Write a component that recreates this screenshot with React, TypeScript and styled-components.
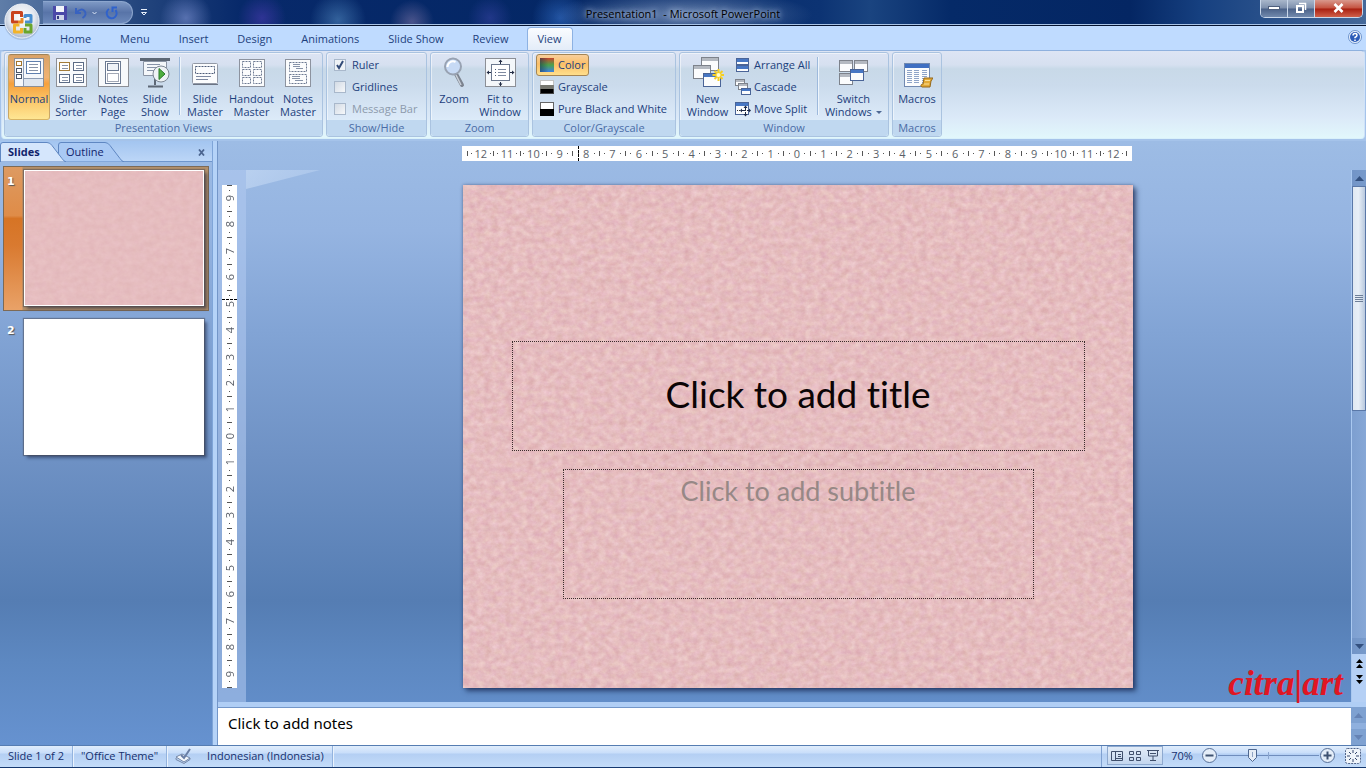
import React from 'react';
import styled, { createGlobalStyle, css } from 'styled-components';

const Global = createGlobalStyle`
  * { box-sizing: border-box; }
  body { margin: 0; background: #5d87c0; }
  button, input { font: inherit; color: inherit; margin: 0; }
`;

const Shell = styled.div`
  min-height: 100vh;
  display: flex;
  flex-direction: column;
  font-family: 'Open Sans', 'Noto Sans', sans-serif;
  font-size: 11px;
  line-height: 13px;
  color: #1d3f7c;
`;

const plainButton = css`
  border: 0;
  padding: 0;
  background: none;
`;

/* ---------- title bar ---------- */

const TitleBar = styled.header`
  position: relative;
  display: grid;
  grid-template-columns: 1fr auto 1fr;
  height: 26px;
  border-bottom: 1px solid #04122f;
  box-shadow: inset 0 -1px 0 #a9c4e6;
  background:
    radial-gradient(ellipse 130px 26px at 50% 60%, rgba(150, 172, 208, 0.65), transparent),
    radial-gradient(circle 26px at 186px 18px, rgba(130, 150, 215, 0.6), transparent),
    radial-gradient(circle 24px at 262px 18px, rgba(86, 62, 190, 0.5), transparent),
    radial-gradient(circle 28px at 338px 20px, rgba(80, 135, 190, 0.6), transparent),
    radial-gradient(circle 22px at 412px 22px, rgba(130, 120, 170, 0.55), transparent),
    radial-gradient(circle 22px at 490px 18px, rgba(60, 70, 170, 0.5), transparent),
    radial-gradient(circle 28px at 560px 18px, rgba(50, 110, 200, 0.6), transparent),
    linear-gradient(90deg, #5f7da8 0, #23457d 140px, #07296a 240px, #042765 600px, #0c3373 820px, #1a4480 870px, #052a68 950px, #042663 1130px, #164080 1200px, #45699a 100%);
`;

const QuickAccess = styled.div`
  display: flex;
  align-items: center;
  gap: 8px;
  margin-left: 43px;
`;

const QuickPill = styled.div`
  display: flex;
  align-items: center;
  gap: 7px;
  width: 90px;
  height: 23px;
  padding: 0 12px 0 10px;
  border: 1px solid #8ca6ce;
  border-left: 0;
  border-radius: 0 12px 12px 0;
  background: linear-gradient(#7d98c4, #5874a8 50%, #6b88ba);
`;

const IconButton = styled.button`
  ${plainButton}
  display: flex;
`;

const AppTitle = styled.h1`
  margin: 0;
  padding-top: 7px;
  font-size: 11px;
  line-height: 14px;
  font-weight: 400;
  color: #000;
  text-shadow: 0 0 5px #b9cbe6, 0 0 8px #b9cbe6;
`;

const WindowButtons = styled.div`
  justify-self: end;
  display: flex;
  height: 18px;
  margin-right: 3px;
  border: 1px solid #c9d7ea;
  border-top: 0;
  border-radius: 0 0 5px 5px;
  overflow: hidden;
`;

const WindowButton = styled.button<{ $close?: boolean }>`
  ${plainButton}
  display: flex;
  align-items: center;
  justify-content: center;
  width: ${p => (p.$close ? 47 : 27)}px;
  padding-bottom: 2px;
  border-right: ${p => (p.$close ? 0 : '1px solid #c9d7ea')};
  background: ${p => p.$close
    ? 'linear-gradient(#d9988c, #c4513f 48%, #a81f10 52%, #d0604a)'
    : 'linear-gradient(#a9b7cb, #7d8fac 48%, #4a6188 52%, #7189ad)'};
`;

const Orb = styled.button`
  ${plainButton}
  position: absolute;
  z-index: 2;
  left: 3px;
  top: 2px;
  width: 38px;
  height: 38px;
`;

/* ---------- ribbon ---------- */

const RibbonTabs = styled.nav`
  display: flex;
  align-items: flex-end;
  height: 24px;
  padding-left: 46px;
  background: #bfdbff;
`;

const RibbonTab = styled.button<{ $active?: boolean }>`
  ${plainButton}
  height: 23px;
  margin: 0 4px 0 3px;
  padding: 0 10px 2px;
  border: 1px solid ${p => (p.$active ? '#8db2e3' : 'transparent')};
  border-bottom: 0;
  border-radius: 4px 4px 0 0;
  background: ${p => (p.$active ? 'linear-gradient(#fafcff, #e3ecf8)' : 'none')};
`;

const HelpSlot = styled.div`
  margin: 0 4px 6px auto;
`;

const RibbonFrame = styled.div`
  padding: 0 1px 2px;
  background: #a5c3ea;
`;

const Ribbon = styled.section`
  display: flex;
  gap: 3px;
  height: 89px;
  padding: 1px 2px;
  border: 1px solid #8fb1de;
  border-color: #8fb1de #cfe2f8 #d9f1fb;
  border-radius: 4px;
  background: linear-gradient(#dde5f4 0, #d6e0f0 14px, #c8d9e8 18px, #cbdbec 34px, #dbe9f8 66px, #e2f8fc 88px);
`;

const GroupBox = styled.fieldset<{ $width: number }>`
  flex: 0 0 ${p => p.$width}px;
  display: flex;
  flex-direction: column;
  min-width: 0;
  margin: 0;
  padding: 0;
  border: 1px solid #aac3e0;
  border-radius: 3px;
  box-shadow: inset 1px 1px 0 rgba(255, 255, 255, 0.5);
  overflow: hidden;
`;

const GroupBody = styled.div`
  display: flex;
  flex: 1;
  padding: 1px 3px 0;
`;

const GroupLabel = styled.div`
  height: 16px;
  line-height: 16px;
  text-align: center;
  color: #4a6ca6;
  background: #c0d8f0;
`;

const BigButton = styled.button<{ $width: number; $active?: boolean }>`
  ${plainButton}
  flex: 0 0 ${p => p.$width}px;
  display: flex;
  flex-direction: column;
  align-items: center;
  gap: 3px;
  height: 66px;
  padding-top: 2px;
  border: 1px solid transparent;
  border-radius: 3px;
  white-space: pre;
  ${p => p.$active && css`
    border-color: #a08358 #c9a666 #d8b464;
    background: linear-gradient(#d9a268, #f0b272 35%, #f6a03c 45%, #fbc567 70%, #fee693);
  `}
`;

const Divider = styled.div`
  flex: 0 0 1px;
  height: 58px;
  margin: 3px 3px;
  background: #9db9dc;
  box-shadow: 1px 0 0 #eef5fc;
`;

const Stack = styled.div`
  display: flex;
  flex-direction: column;
  align-items: flex-start;
`;

const SmallButton = styled.button<{ $active?: boolean }>`
  ${plainButton}
  display: flex;
  align-items: center;
  gap: 3px;
  height: 22px;
  padding: 0 3px 1px 2px;
  border: 1px solid ${p => (p.$active ? '#a58554' : 'transparent')};
  border-radius: 3px;
  white-space: nowrap;
  background: ${p => (p.$active ? 'linear-gradient(#f8cf9c, #fbbf68 45%, #ffdf8c)' : 'none')};
`;

const CheckRow = styled.label<{ $off?: boolean }>`
  display: flex;
  align-items: center;
  gap: 6px;
  height: 22px;
  padding: 0 0 1px 4px;
  white-space: nowrap;
  color: ${p => (p.$off ? '#8d9aac' : 'inherit')};
`;

const Check = styled.input`
  appearance: none;
  width: 12px;
  height: 12px;
  border: 1px solid #a9b8cb;
  background: linear-gradient(135deg, #d3dbe5, #f6f8fa);
  &:checked {
    background: no-repeat center / 10px 10px
      url("data:image/svg+xml,%3Csvg xmlns='http://www.w3.org/2000/svg' viewBox='0 0 10 10'%3E%3Cpath d='M2 5l2 3 4-7' fill='none' stroke='%23334b78' stroke-width='2'/%3E%3C/svg%3E"), #eef2f6;
  }
`;

/* ---------- work area ---------- */

const backdrop = 'linear-gradient(#9dbce5 0, #95b4e1 90px, #82a4d5 190px, #6e91c4 320px, #557db3 460px, #5d88c1 520px, #6692d0 604px)';

const Work = styled.main`
  flex: 1;
  display: flex;
  min-height: 0;
`;

const SidePane = styled.aside`
  flex: 0 0 212px;
  background: ${backdrop};
`;

const PaneTabs = styled.div`
  display: flex;
  height: 21px;
  padding-top: 1px;
  border-bottom: 1px solid #6f96cc;
  background: linear-gradient(#a3c5f0, #bcd6f7);
`;

const PaneTab = styled.button<{ $active?: boolean }>`
  ${plainButton}
  position: relative;
  z-index: ${p => (p.$active ? 1 : 0)};
  width: 66px;
  margin-right: -8px;
  padding: 0 18px 0 8px;
  text-align: left;
  font-weight: ${p => (p.$active ? 700 : 400)};
  color: #10246c;
  svg { position: absolute; z-index: -1; inset: 0; }
`;

const PaneClose = styled.button`
  ${plainButton}
  margin-left: auto;
  padding-right: 7px;
`;

const ThumbList = styled.ol`
  list-style: none;
  margin: 0;
  padding: 4px 3px;
`;

const ThumbItem = styled.li<{ $active?: boolean }>`
  display: flex;
  height: 145px;
  margin-bottom: 4px;
  padding: 3px 4px 4px 3px;
  border: 1px solid ${p => (p.$active ? '#7d6a55' : 'transparent')};
  background: ${p => (p.$active
    ? 'linear-gradient(90deg, transparent 18px, #b28f6a 19px), linear-gradient(#dd9a61, #df8c48 34%, #d67425 36%, #d97a30 55%, #e9a268)'
    : 'none')};
`;

const ThumbNumber = styled.span`
  width: 17px;
  padding-top: 5px;
  font: bold 11px/13px 'DejaVu Sans', sans-serif;
  color: #fff;
  text-shadow: 1px 1px 1px #555;
`;

const Thumb = styled.button<{ $pink?: boolean }>`
  ${plainButton}
  position: relative;
  flex: 1;
  height: 136px;
  border: 1px solid #fff;
  background: ${p => (p.$pink ? '#e6bcbe' : '#fff')};
  box-shadow: 0 0 1px 1px rgba(70, 70, 80, 0.5), 3px 3px 3px rgba(20, 30, 60, 0.5);
  overflow: hidden;
`;

const PaneSplitter = styled.div`
  flex: 0 0 6px;
  border-left: 1px solid #7fa5d8;
  border-right: 1px solid #7396c8;
  background: #b5d3f8;
`;

const EditColumn = styled.div`
  flex: 1;
  min-width: 0;
  display: flex;
  flex-direction: column;
`;

const Editor = styled.section`
  position: relative;
  flex: 1;
  display: grid;
  grid-template-columns: 28px minmax(0, 1fr) 15px;
  grid-template-rows: 29px minmax(0, 1fr);
  background: ${backdrop};
`;

const TopGutter = styled.div`
  grid-column: 2;
  display: flex;
  align-items: flex-start;
  justify-content: center;
  padding: 5px 3px 0 0;
`;

const SideGutter = styled.div`
  grid-column: 1;
  grid-row: 2;
  display: flex;
  align-items: center;
  padding: 0 0 0 4px;
  background: rgba(178, 203, 240, 0.55);
`;

const RulerBar = styled.div<{ $vertical?: boolean }>`
  display: flex;
  flex-direction: ${p => (p.$vertical ? 'column' : 'row')};
  align-items: center;
  width: ${p => (p.$vertical ? '15px' : '670px')};
  height: ${p => (p.$vertical ? '503px' : '15px')};
  padding: ${p => (p.$vertical ? '0' : '0 5px')};
  background: #fff;
  font: 11px/13px 'Open Sans', sans-serif;
  color: #5a5f68;
`;

const RulerUnit = styled.div<{ $vertical?: boolean }>`
  flex: 1;
  display: flex;
  flex-direction: ${p => (p.$vertical ? 'column' : 'row')};
  align-items: center;
  justify-content: space-between;
  min-width: 0;
  min-height: 0;
`;

const Tick = styled.i<{ $vertical?: boolean; $dot?: boolean }>`
  width: ${p => (p.$vertical && !p.$dot ? 5 : 1)}px;
  height: ${p => (p.$vertical || p.$dot ? 1 : 5)}px;
  background: #555;
`;

const RulerNumber = styled.span<{ $vertical?: boolean }>`
  ${p => p.$vertical && css`
    writing-mode: vertical-rl;
    transform: rotate(180deg);
  `}
`;

const PointerMark = styled.i<{ $vertical?: boolean }>`
  position: absolute;
  ${p => p.$vertical
    ? 'left: 4px; top: 158px; width: 15px; border-top: 1px dashed #000;'
    : 'left: 360px; top: 5px; height: 15px; border-left: 1px dashed #000;'}
`;

const Canvas = styled.div`
  grid-column: 2;
  grid-row: 2;
  position: relative;
  display: flex;
  align-items: center;
  justify-content: center;
  padding-right: 2px;
`;

const Glint = styled.div`
  position: absolute;
  left: 0;
  top: 0;
  width: 74px;
  height: 19px;
  clip-path: polygon(0 0, 100% 0, 0 100%);
  background: linear-gradient(135deg, rgba(205, 223, 247, 0.6), rgba(190, 212, 242, 0.4));
`;

const Slide = styled.article`
  position: relative;
  display: flex;
  flex-direction: column;
  align-items: center;
  gap: 18px;
  width: 670px;
  height: 503px;
  padding: 156px 0 0 1px;
  background: #e6bcbe;
  box-shadow: 3px 3px 5px rgba(20, 35, 75, 0.7), 0 0 3px rgba(20, 35, 75, 0.4);
  font-family: Lato, 'Open Sans', sans-serif;
  font-variant-ligatures: none;
`;

const Placeholder = styled.div<{ $title?: boolean }>`
  position: relative;
  display: flex;
  justify-content: center;
  align-items: ${p => (p.$title ? 'center' : 'flex-start')};
  width: ${p => (p.$title ? 573 : 471)}px;
  height: ${p => (p.$title ? 110 : 130)}px;
  padding: ${p => (p.$title ? '0 0 4px' : '3px 0 0')};
  border: 1px dotted #3b2c2c;
  font-size: ${p => (p.$title ? 37 : 27)}px;
  line-height: 36px;
  color: ${p => (p.$title ? '#0b0405' : '#978886')};
`;

const TextureSvg = styled.svg`
  position: absolute;
  inset: 0;
  width: 100%;
  height: 100%;
`;

const Scroll = styled.div`
  grid-column: 3;
  grid-row: 2;
  display: flex;
  flex-direction: column;
  border-left: 1px solid #a9c8f0;
  background: linear-gradient(90deg, #7d9fd0, #86a7d6);
`;

const ScrollStep = styled.button`
  ${plainButton}
  display: flex;
  align-items: center;
  justify-content: center;
  height: 16px;
  background: rgba(90, 125, 180, 0.3);
`;

const ScrollThumb = styled.div`
  flex: 0 0 225px;
  display: flex;
  align-items: center;
  justify-content: center;
  border: 1px solid #5a78a8;
  background: linear-gradient(90deg, #dfe8f2, #e8eff7 45%, #b9c9de);
`;

const SlideSteps = styled.div`
  display: flex;
  flex-direction: column;
  height: 48px;
  padding-top: 1px;
  background: #b5d0f5;
`;

const SlideStep = styled.button`
  ${plainButton}
  display: flex;
  justify-content: center;
  height: 16px;
  padding-top: 4px;
`;

const Spacer = styled.div`
  flex: 1;
`;

const Watermark = styled.div`
  position: absolute;
  right: 23px;
  bottom: 0;
  font: italic bold 35px/36px 'Liberation Serif', serif;
  color: #e01623;
`;

const Notes = styled.section`
  display: grid;
  grid-template-columns: 1fr 15px;
  height: 43px;
  padding-top: 5px;
  background: #b0cef5;
`;

const NotesInput = styled.textarea`
  display: block;
  width: 100%;
  height: 38px;
  padding: 5px 10px;
  border: 0;
  border-top: 1px solid #7396c8;
  resize: none;
  outline: 0;
  font: 15px/20px 'Noto Sans', sans-serif;
  color: #000;
  overflow: hidden;
  &::placeholder { color: #000; opacity: 1; }
`;

const NotesScroll = styled.div`
  display: flex;
  flex-direction: column;
  justify-content: space-between;
  background: #8fb0de;
`;

/* ---------- status bar ---------- */

const StatusBar = styled.footer`
  display: flex;
  align-items: stretch;
  height: 23px;
  border-top: 1px solid #567db2;
  border-bottom: 1px solid #15386f;
  background: linear-gradient(#e0edfc 0, #c9defa 7px, #b4cff3 8px, #c4dcf9 100%);
  color: #15306e;
`;

const StatusCell = styled.div`
  display: flex;
  align-items: center;
  gap: 15px;
  padding: 0 8px 2px;
  border-right: 1px solid #93b3de;
  box-shadow: 1px 0 0 #e9f2fd;
`;

const StatusTools = styled.div`
  display: flex;
  align-items: center;
  margin-left: auto;
  padding: 0 5px 2px;
  border-left: 1px solid #7fa0d0;
`;

const ViewButtons = styled.div`
  display: flex;
  width: 56px;
  height: 19px;
  border: 1px solid #8ea9cf;
  background: linear-gradient(#e2ecf8, #c3d6ef);
`;

const ViewButton = styled.button`
  ${plainButton}
  flex: 1;
  display: flex;
  align-items: center;
  justify-content: center;
`;

const ZoomValue = styled.button`
  ${plainButton}
  width: 22px;
  margin: 0 8px;
`;

const ZoomRange = styled.input`
  appearance: none;
  width: 101px;
  height: 16px;
  background:
    linear-gradient(#8aa5cf, #8aa5cf) 50% 50% / 1px 7px no-repeat,
    linear-gradient(#6f8dbd, #6f8dbd) 0 50% / 100% 1px no-repeat;
  &::-webkit-slider-thumb {
    appearance: none;
    width: 9px;
    height: 13px;
    background: no-repeat center / 9px 13px
      url("data:image/svg+xml,%3Csvg xmlns='http://www.w3.org/2000/svg' viewBox='0 0 9 13'%3E%3Cpath d='M.5.5h8v8l-4 4-4-4z' fill='%23e6edf6' stroke='%234f6890'/%3E%3Cpath d='M4.500 3v5' stroke='%2390a4c4'/%3E%3C/svg%3E");
  }
`;

/* ---------- drawings ---------- */

/* Paper grain; soft halves the contrast for the thumbnail. */
const Texture = ({ id, soft }: { id: string; soft?: boolean }) => (
  <TextureSvg aria-hidden="true">
    <filter id={id} x="0" y="0" width="100%" height="100%" colorInterpolationFilters="sRGB">
      <feTurbulence type="fractalNoise" baseFrequency="0.14 0.17" numOctaves="5" seed="8" />
      <feColorMatrix
        values={soft
          ? '0.04 0 0 0 0.88  0.06 0.02 0 0 0.70  0.06 0 0.02 0 0.71  0 0 0 0 1'
          : '0.10 0 0 0 0.85  0.16 0.06 0 0 0.63  0.14 0 0.06 0 0.65  0 0 0 0 1'}
      />
    </filter>
    <rect width="100%" height="100%" filter={`url(#${id})`} />
  </TextureSvg>
);

const Svg32 = ({ children }: { children: React.ReactNode }) => (
  <svg width="32" height="32" viewBox="0 0 32 32" fill="none" aria-hidden="true">{children}</svg>
);
const Svg16 = ({ children }: { children: React.ReactNode }) => (
  <svg width="16" height="16" viewBox="0 0 16 16" fill="none" aria-hidden="true">{children}</svg>
);

const lines = (x: number, y: number, w: number, n: number, step = 2, c = '#8793a8') =>
  Array.from({ length: n }, (_, i) => <path key={`${x}-${y}-${i}`} d={`M${x} ${y + i * step + 0.5}h${w}`} stroke={c} />);

const NormalIcon = () => (
  <Svg32>
    <rect x="1.500" y="1.500" width="29" height="28" fill="#f5f7fa" stroke="#8c8f96" />
    <path d="M10.500 2v27M11 21.500h19" stroke="#8d9cb4" />
    <path d="M11 22h19v7H11z" fill="#dfe6ef" />
    {[4, 11, 17].map(y => <rect key={y} x="3.500" y={y + 0.5} width="5" height="4" fill="#fff" stroke={y === 4 ? '#a5762c' : '#4a5568'} />)}
    <rect x="13.500" y="4.500" width="14" height="12" fill="#fff" stroke="#5f7fae" />
    {lines(16, 7, 9, 3, 3)}
  </Svg32>
);
const SorterIcon = () => (
  <Svg32>
    <rect x="1.500" y="1.500" width="30" height="28" fill="#f7f9fb" stroke="#8c8f96" />
    {[[4, 5], [18, 5], [4, 17], [18, 17]].map(([x, y], i) => (
      <g key={i}>
        <rect x={x + 0.5} y={y + 0.5} width="10" height="8" fill="#fff" stroke={i === 0 ? '#a37c3a' : '#5b6b85'} />
        {lines(x + 3, y + 3, 6, 2, 3)}
      </g>
    ))}
  </Svg32>
);
const NotesPageIcon = () => (
  <Svg32>
    <rect x="1.500" y="1.500" width="30" height="28" fill="#f7f9fb" stroke="#8c8f96" />
    <rect x="8.500" y="4.500" width="15" height="22" fill="#fff" stroke="#6b7a92" />
    <rect x="10.500" y="6.500" width="11" height="7" fill="#eef2f7" stroke="#6b7a92" />
    <rect x="10.500" y="16.500" width="11" height="8" stroke="#44506a" strokeDasharray="1 1" />
  </Svg32>
);
const ShowIcon = () => (
  <Svg32>
    <rect x="1" y="1" width="30" height="3" fill="#5d6775" />
    <path d="M4.500 4.500h23v14h-23z" fill="#f4f7fa" stroke="#8a94a4" />
    {lines(8, 7, 13, 3, 3)}
    <path d="M16 20v8M9 29.500h15" stroke="#5d6775" strokeWidth="2" />
    <circle cx="22" cy="17" r="8" fill="#eef2f5" stroke="#7d8794" />
    <path d="M20 11.500v11l6-5.500z" fill="#4fae3e" stroke="#2a7a2a" />
  </Svg32>
);
const SlideMasterIcon = () => (
  <Svg32>
    <rect x="3.500" y="6.500" width="25" height="20" rx="1" fill="#fbfcfd" stroke="#9299a6" />
    <path d="M4 27.500h25" stroke="#6b7484" />
    <rect x="6.500" y="9.500" width="19" height="7" stroke="#4d5c78" strokeDasharray="2 1" />
    <path d="M7 19.500h15M7 22.500h12" stroke="#7d88a0" />
  </Svg32>
);
const HandoutIcon = () => (
  <Svg32>
    <rect x="3.500" y="2.500" width="25" height="27" fill="#fbfcfd" stroke="#8d939f" />
    {[3, 11, 19].map(y => [6, 17].map(x => (
      <rect key={`${x}${y}`} x={x + 0.5} y={y + 1.5} width="8" height="6" stroke="#6d7a92" strokeDasharray="2 1" />
    )))}
  </Svg32>
);
const NotesMasterIcon = () => (
  <Svg32>
    <rect x="3.500" y="2.500" width="25" height="27" fill="#fbfcfd" stroke="#8d939f" />
    <rect x="7.500" y="5.500" width="17" height="9" stroke="#6d7a92" strokeDasharray="2 1" />
    <rect x="7.500" y="17.500" width="17" height="9" stroke="#6d7a92" strokeDasharray="2 1" />
    {lines(11, 7, 7, 2, 2)}{lines(14, 11, 7, 1)}{lines(10, 19, 8, 2, 2)}{lines(13, 23, 8, 1)}
  </Svg32>
);
const ZoomIcon = () => (
  <Svg32>
    <path d="M18 17l6 11" stroke="#7c838f" strokeWidth="4" strokeLinecap="round" />
    <path d="M18 18l5 10" stroke="#c9cfd8" strokeWidth="1.500" />
    <circle cx="15" cy="9.500" r="8" fill="#c7daf5" stroke="#98a2b2" strokeWidth="2" />
    <path d="M9.500 10a5.500 5.500 0 0 1 8-5" stroke="#fff" strokeWidth="2" />
  </Svg32>
);
const FitIcon = () => (
  <Svg32>
    <rect x="1.500" y="1.500" width="30" height="28" fill="#f4f7fa" stroke="#8c8f96" />
    <rect x="7.500" y="7.500" width="18" height="16" fill="#fff" stroke="#6c788e" />
    {lines(14, 12, 8, 3, 3, '#7f8aa0')}
    <path d="M11 12.500h1M11 15.500h1M11 18.500h1" stroke="#4c5a74" />
    <path d="M16.500 3v4M16.500 25v4M3 15.500h4M26 15.500h4" stroke="#222c44" />
    <path d="M14.500 5l2-2.500 2 2.500zM14.500 26.500l2 2.500 2-2.500zM5 13.500l-2.500 2 2.500 2zM28 13.500l2.500 2-2.500 2z" fill="#222c44" />
  </Svg32>
);

const Win = ({ x, y, w, h, blue }: { x: number; y: number; w: number; h: number; blue?: boolean }) => (
  <g>
    <rect x={x + 0.5} y={y + 0.5} width={w} height={h} fill="#fbfcfd" stroke={blue ? '#4a6497' : '#7d828b'} />
    <rect x={x + 1} y={y + 1} width={w - 1} height={w > 10 ? 3 : 2} fill={blue ? '#4777c4' : '#b4b9c1'} />
  </g>
);

const NewWindowIcon = () => (
  <Svg32>
    <Win x={9} y={0} w={17} h={13} />
    <Win x={1} y={8} w={17} h={13} />
    <Win x={11} y={16} w={17} h={13} blue />
    <path d="M26.500 12v12M20.500 18h12M22.500 14l8 8M30.500 14l-8 8" stroke="#f5cf24" strokeWidth="2" />
    <circle cx="26.500" cy="18" r="2" fill="#fffbd0" />
  </Svg32>
);
const SwitchIcon = () => (
  <Svg32>
    <Win x={2} y={3} w={13} h={11} />
    <Win x={17} y={3} w={13} h={11} />
    <Win x={2} y={16} w={13} h={11} />
    <Win x={13} y={12} w={13} h={11} blue />
  </Svg32>
);
const MacrosIcon = () => (
  <Svg32>
    <rect x="3.500" y="6.500" width="25" height="23" fill="#fbfcfd" stroke="#7189b0" />
    <rect x="4" y="7" width="24" height="4" fill="#3f6fc2" />
    {[6, 13, 21].map(x => lines(x, 13, 5, 7, 2, '#8ea4c8'))}
    <path d="M23 21h9l-2 3-1 6h-8c-2-1-1-3 1-3z" fill="#e3aa36" stroke="#94671a" />
    <path d="M24 23.500h5M23 27h5" stroke="#fbe09a" />
  </Svg32>
);
const ArrangeIcon = () => (
  <Svg16><Win x={1} y={1} w={12} h={6} blue /><Win x={1} y={8} w={12} h={6} blue /></Svg16>
);
const CascadeIcon = () => (
  <Svg16><Win x={0} y={0} w={9} h={6} /><Win x={3} y={4} w={9} h={6} /><Win x={6} y={9} w={9} h={6} blue /></Svg16>
);
const SplitIcon = () => (
  <Svg16>
    <Win x={0} y={1} w={13} h={12} blue />
    <path d="M2 9.500h12" stroke="#333" strokeDasharray="1 1" />
    <path d="M10.500 5v10M6 9.500h9" stroke="#1d2a48" strokeDasharray="4 2" />
    <path d="M8.500 7l2-2.500 2 2.500zM8.500 13l2 2.500 2-2.500zM14 7.500l2 2-2 2zM7 7.500l-2 2 2 2z" fill="#1d2a48" />
  </Svg16>
);
const ColorIcon = () => (
  <Svg16>
    <defs>
      <linearGradient id="hueA" x1="0" x2="0" y1="0" y2="1"><stop offset="0" stopColor="#c8452c" /><stop offset=".5" stopColor="#4ba24c" /><stop offset="1" stopColor="#3f7fe0" /></linearGradient>
      <linearGradient id="hueB"><stop offset="0" stopColor="#14324c" stopOpacity=".55" /><stop offset=".6" stopColor="#14324c" stopOpacity="0" /></linearGradient>
    </defs>
    <rect x="1" y="1" width="14" height="14" fill="url(#hueA)" />
    <rect x="1" y="1" width="14" height="14" fill="url(#hueB)" />
  </Svg16>
);
const GrayIcon = () => (
  <Svg16>
    <rect x="1" y="1" width="14" height="14" fill="#fff" />
    <path d="M1 6h14v4H1z" fill="#77776f" /><path d="M1 10h14v5H1z" fill="#000" />
    <rect x="1.500" y="1.500" width="13" height="13" stroke="#888" strokeOpacity=".5" />
  </Svg16>
);
const BwIcon = () => (
  <Svg16>
    <rect x="1.500" y="1.500" width="13" height="13" fill="#fff" stroke="#666" /><path d="M1 8h14v7H1z" fill="#000" />
  </Svg16>
);

const OrbArt = () => (
  <svg width="38" height="38" viewBox="0 0 38 38" fill="none" aria-hidden="true">
    <defs>
      <radialGradient id="orb" cx=".5" cy=".4" r=".62"><stop offset="0" stopColor="#fff" /><stop offset=".6" stopColor="#e4e8ef" /><stop offset="1" stopColor="#a3b1c9" /></radialGradient>
    </defs>
    <circle cx="19" cy="20" r="18" fill="#8fa5c6" opacity=".5" />
    <circle cx="19" cy="19" r="17" fill="url(#orb)" stroke="#eef2f8" />
    <g strokeWidth="3" strokeLinejoin="round">
      <path d="M15 20H9.500V10.500h9V15" stroke="#c9441f" />
      <path d="M15 20h4V16" stroke="#e98a25" />
      <path d="M22 20H28v-6.500h-6v2.500" stroke="#4a8fd0" />
      <path d="M16.500 23h-5v7h7V26" stroke="#f2b32a" />
      <path d="M22 26v4H28v-7h-6" stroke="#6aa62c" />
    </g>
  </svg>
);

const Arrow = ({ up, color = '#33507f' }: { up?: boolean; color?: string }) => (
  <svg width="9" height="5" viewBox="0 0 9 5" aria-hidden="true"><path d={up ? 'M0 5h9L4.500 0z' : 'M0 0h9L4.500 5z'} fill={color} /></svg>
);
const DoubleArrow = ({ up }: { up?: boolean }) => (
  <svg width="7" height="10" viewBox="0 0 7 10" aria-hidden="true">
    <path d={up ? 'M0 4h7L3.500 0zM0 9h7L3.500 5z' : 'M0 0h7L3.500 4zM0 5h7L3.500 9z'} fill="#000" />
  </svg>
);

const ZoomStep = ({ plus }: { plus?: boolean }) => (
  <svg width="17" height="17" viewBox="0 0 17 17" fill="none" aria-hidden="true">
    <circle cx="8.500" cy="8.500" r="7" fill="#e4edf8" stroke="#566f98" />
    <path d={plus ? 'M4.500 8.500h8M8.500 4.500v8' : 'M4.500 8.500h8'} stroke="#3f5271" strokeWidth="2" />
  </svg>
);

const TabShape = ({ active }: { active?: boolean }) => (
  <svg width="66" height="20" viewBox="0 0 66 20" aria-hidden="true">
    <path d="M.5 20V3q0-2.500 2.500-2.500h44q3 0 5 3l10 13q2 3 4 3.500z" fill={active ? '#d5e6fc' : '#a9c9f4'} stroke="#5f87c2" />
  </svg>
);

/* ---------- composed parts ---------- */

const Group = ({ label, width, children }: { label: string; width: number; children: React.ReactNode }) => (
  <GroupBox $width={width} aria-label={label}>
    <GroupBody>{children}</GroupBody>
    <GroupLabel>{label}</GroupLabel>
  </GroupBox>
);

const Ruler = ({ max, vertical }: { max: number; vertical?: boolean }) => (
  <RulerBar $vertical={vertical}>
    {Array.from({ length: max * 2 + 1 }, (_, i) => Math.abs(i - max)).map((n, i) => (
      <RulerUnit key={i} $vertical={vertical}>
        <Tick $vertical={vertical} />
        <Tick $dot />
        <RulerNumber $vertical={vertical}>{n}</RulerNumber>
        <Tick $dot />
        <span />
      </RulerUnit>
    ))}
    <Tick $vertical={vertical} />
  </RulerBar>
);

const MenuCaret = styled.span`
  display: inline-block;
  margin-left: 4px;
  vertical-align: 2px;
  border: 3px solid transparent;
  border-top-color: #4d6894;
  border-bottom: 0;
`;

const tabs = ['Home', 'Menu', 'Insert', 'Design', 'Animations', 'Slide Show', 'Review', 'View'];

export default function App() {
  return (
    <Shell>
      <Global />
      <TitleBar>
        <QuickAccess>
          <QuickPill>
            <IconButton aria-label="Save">
              <svg width="14" height="14" viewBox="0 0 14 14" aria-hidden="true">
                <path d="M0 0h14v14H0z" fill="#4a48a8" /><path d="M3 0h8v6H3z" fill="#f2f4fa" /><path d="M3 9h8v5H3z" fill="#cfd5ea" /><path d="M4 10h2v3H4z" fill="#333b80" />
              </svg>
            </IconButton>
            <IconButton aria-label="Undo">
              <svg width="24" height="14" viewBox="0 0 24 14" fill="none" aria-hidden="true">
                <path d="M2 2v5h5M2.500 6.500q5-5 8-1.500t-2 7" stroke="#3862c0" strokeWidth="2" />
                <path d="M18.500 6l2 2 2-2" stroke="#dbe6f6" />
              </svg>
            </IconButton>
            <IconButton aria-label="Redo">
              <svg width="14" height="14" viewBox="0 0 14 14" fill="none" aria-hidden="true">
                <path d="M4 3a5 5 0 1 0 6.500 1M12 1.500H7.500V6" stroke="#2f62cc" strokeWidth="2" />
              </svg>
            </IconButton>
          </QuickPill>
          <IconButton aria-label="Customize toolbar">
            <svg width="6" height="7" viewBox="0 0 6 7" fill="none" aria-hidden="true"><path d="M0 .5h6M.5 3.500h5L3 6z" stroke="#e6eefa" /></svg>
          </IconButton>
        </QuickAccess>
        <AppTitle>Presentation1&nbsp; - Microsoft PowerPoint</AppTitle>
        <WindowButtons>
          <WindowButton aria-label="Minimize"><svg width="12" height="5" aria-hidden="true"><rect x=".5" y="1.500" width="11" height="3" fill="#fff" stroke="#4f5f7d" /></svg></WindowButton>
          <WindowButton aria-label="Restore">
            <svg width="12" height="12" viewBox="0 0 12 12" fill="none" aria-hidden="true"><path d="M4 1.500h6.500V8" stroke="#fff" strokeWidth="1.500" /><rect x="2" y="4" width="6" height="6" stroke="#fff" strokeWidth="2" /></svg>
          </WindowButton>
          <WindowButton aria-label="Close" $close>
            <svg width="11" height="10" viewBox="0 0 11 10" aria-hidden="true"><path d="M1.500 1l8 8M9.500 1l-8 8" stroke="#fff" strokeWidth="2.600" /></svg>
          </WindowButton>
        </WindowButtons>
        <Orb aria-label="Office"><OrbArt /></Orb>
      </TitleBar>

      <RibbonTabs>
        {tabs.map(t => <RibbonTab key={t} $active={t === 'View'}>{t}</RibbonTab>)}
        <HelpSlot>
          <IconButton aria-label="Help">
            <svg width="14" height="14" viewBox="0 0 14 14" fill="none" aria-hidden="true">
              <circle cx="7" cy="7" r="6.500" fill="#eaf2fc" stroke="#6d93cc" /><circle cx="7" cy="7" r="5" fill="#2c5cb8" />
              <path d="M5 5.500q0-2 2-2t2 1.700q0 1-2 2.300v.8M7 9.500v1.500" stroke="#fff" strokeWidth="1.500" />
            </svg>
          </IconButton>
        </HelpSlot>
      </RibbonTabs>

      <RibbonFrame>
        <Ribbon>
          <Group label="Presentation Views" width={319}>
            <BigButton $width={42} $active><NormalIcon />Normal</BigButton>
            <BigButton $width={42}><SorterIcon />{'Slide\nSorter'}</BigButton>
            <BigButton $width={42}><NotesPageIcon />{'Notes\nPage'}</BigButton>
            <BigButton $width={42}><ShowIcon />{'Slide\nShow'}</BigButton>
            <Divider />
            <BigButton $width={44}><SlideMasterIcon />{'Slide\nMaster'}</BigButton>
            <BigButton $width={49}><HandoutIcon />{'Handout\nMaster'}</BigButton>
            <BigButton $width={44}><NotesMasterIcon />{'Notes\nMaster'}</BigButton>
          </Group>
          <Group label="Show/Hide" width={101}>
            <Stack>
              <CheckRow><Check type="checkbox" defaultChecked />Ruler</CheckRow>
              <CheckRow><Check type="checkbox" />Gridlines</CheckRow>
              <CheckRow $off><Check type="checkbox" disabled />Message Bar</CheckRow>
            </Stack>
          </Group>
          <Group label="Zoom" width={99}>
            <BigButton $width={40}><ZoomIcon />Zoom</BigButton>
            <BigButton $width={52}><FitIcon />{'Fit to\nWindow'}</BigButton>
          </Group>
          <Group label="Color/Grayscale" width={144}>
            <Stack>
              <SmallButton $active><ColorIcon />Color</SmallButton>
              <SmallButton><GrayIcon />Grayscale</SmallButton>
              <SmallButton><BwIcon />Pure Black and White</SmallButton>
            </Stack>
          </Group>
          <Group label="Window" width={210}>
            <BigButton $width={49}><NewWindowIcon />{'New\nWindow'}</BigButton>
            <Stack>
              <SmallButton><ArrangeIcon />Arrange All</SmallButton>
              <SmallButton><CascadeIcon />Cascade</SmallButton>
              <SmallButton><SplitIcon />Move Split</SmallButton>
            </Stack>
            <Divider />
            <BigButton $width={64}><SwitchIcon /><span>{'Switch\nWindows'}<MenuCaret /></span></BigButton>
          </Group>
          <Group label="Macros" width={50}>
            <BigButton $width={42}><MacrosIcon />Macros</BigButton>
          </Group>
        </Ribbon>
      </RibbonFrame>

      <Work>
        <SidePane>
          <PaneTabs>
            <PaneTab $active><TabShape active />Slides</PaneTab>
            <PaneTab><TabShape />Outline</PaneTab>
            <PaneClose aria-label="Close pane">
              <svg width="7" height="7" viewBox="0 0 7 7" aria-hidden="true"><path d="M1 .5l5 6M6 .5l-5 6" stroke="#4c6590" strokeWidth="1.800" /></svg>
            </PaneClose>
          </PaneTabs>
          <ThumbList>
            <ThumbItem $active><ThumbNumber>1</ThumbNumber><Thumb $pink aria-label="Slide 1"><Texture id="grainSmall" soft /></Thumb></ThumbItem>
            <ThumbItem><ThumbNumber>2</ThumbNumber><Thumb aria-label="Slide 2" /></ThumbItem>
          </ThumbList>
        </SidePane>
        <PaneSplitter />
        <EditColumn>
          <Editor>
            <TopGutter><Ruler max={12} /></TopGutter>
            <SideGutter><Ruler max={9} vertical /></SideGutter>
            <Canvas>
              <Glint />
              <Slide>
                <Texture id="grain" />
                <Placeholder $title>Click to add title</Placeholder>
                <Placeholder>Click to add subtitle</Placeholder>
              </Slide>
            </Canvas>
            <Scroll>
              <ScrollStep aria-label="Scroll up"><Arrow up /></ScrollStep>
              <ScrollThumb>
                <svg width="8" height="8" aria-hidden="true"><path d="M0 .5h8M0 2.500h8M0 4.500h8M0 6.500h8" stroke="#6e7f98" /></svg>
              </ScrollThumb>
              <Spacer />
              <ScrollStep aria-label="Scroll down"><Arrow /></ScrollStep>
              <SlideSteps>
                <SlideStep aria-label="Previous slide"><DoubleArrow up /></SlideStep>
                <SlideStep aria-label="Next slide"><DoubleArrow /></SlideStep>
              </SlideSteps>
            </Scroll>
            <PointerMark />
            <PointerMark $vertical />
            <Watermark>citra|art</Watermark>
          </Editor>
          <Notes>
            <NotesInput aria-label="Notes" placeholder="Click to add notes" />
            <NotesScroll>
              <ScrollStep aria-label="Scroll notes up"><Arrow up color="#6583b5" /></ScrollStep>
              <ScrollStep aria-label="Scroll notes down"><Arrow color="#6583b5" /></ScrollStep>
            </NotesScroll>
          </Notes>
        </EditColumn>
      </Work>

      <StatusBar>
        <StatusCell>Slide 1 of 2</StatusCell>
        <StatusCell>"Office Theme"</StatusCell>
        <StatusCell>
          <svg width="17" height="16" viewBox="0 0 17 16" fill="none" aria-hidden="true">
            <path d="M1 9l6-3 8 4-6 4z" fill="#f4f7fb" stroke="#7486a6" /><path d="M1 10v1.500l8 4 6-4V10" stroke="#7486a6" />
            <path d="M6 7l3 3 6-9" stroke="#6a7ea4" strokeWidth="2" />
          </svg>
          Indonesian (Indonesia)
        </StatusCell>
        <StatusTools>
          <ViewButtons>
            <ViewButton aria-label="Normal view"><svg width="12" height="10" fill="none" aria-hidden="true"><path d="M.5.5h11v9H.5zM4.500 0v10M7 3.500h3M7 5.500h3M5 7.500h6" stroke="#3f4f6c" /></svg></ViewButton>
            <ViewButton aria-label="Sorter view"><svg width="12" height="10" fill="none" aria-hidden="true"><path d="M.5.5h4v3h-4zM7.500.5h4v3h-4zM.5 6.500h4v3h-4zM7.500 6.500h4v3h-4z" stroke="#3f4f6c" /></svg></ViewButton>
            <ViewButton aria-label="Slide show view"><svg width="12" height="11" fill="none" aria-hidden="true"><path d="M0 .5h12M1.500 1v5h9V1M3 3.500h6M6 6v4M3 10.500h6" stroke="#3f4f6c" /></svg></ViewButton>
          </ViewButtons>
          <ZoomValue>70%</ZoomValue>
          <IconButton aria-label="Zoom out"><ZoomStep /></IconButton>
          <ZoomRange type="range" aria-label="Zoom level" defaultValue={33} />
          <IconButton aria-label="Zoom in"><ZoomStep plus /></IconButton>
          <IconButton aria-label="Fit slide to window">
            <svg width="25" height="16" viewBox="-9 0 25 16" fill="none" aria-hidden="true">
              <rect x=".5" y=".5" width="15" height="15" rx="2" fill="#eff4fa" stroke="#50648a" strokeDasharray="2 1" />
              <path d="M8 2v3M8 11v3M2 8h3M11 8h3M4 4l2 2M12 4l-2 2M4 12l2-2M12 12l-2-2" stroke="#34466c" />
            </svg>
          </IconButton>
        </StatusTools>
      </StatusBar>
    </Shell>
  );
}
